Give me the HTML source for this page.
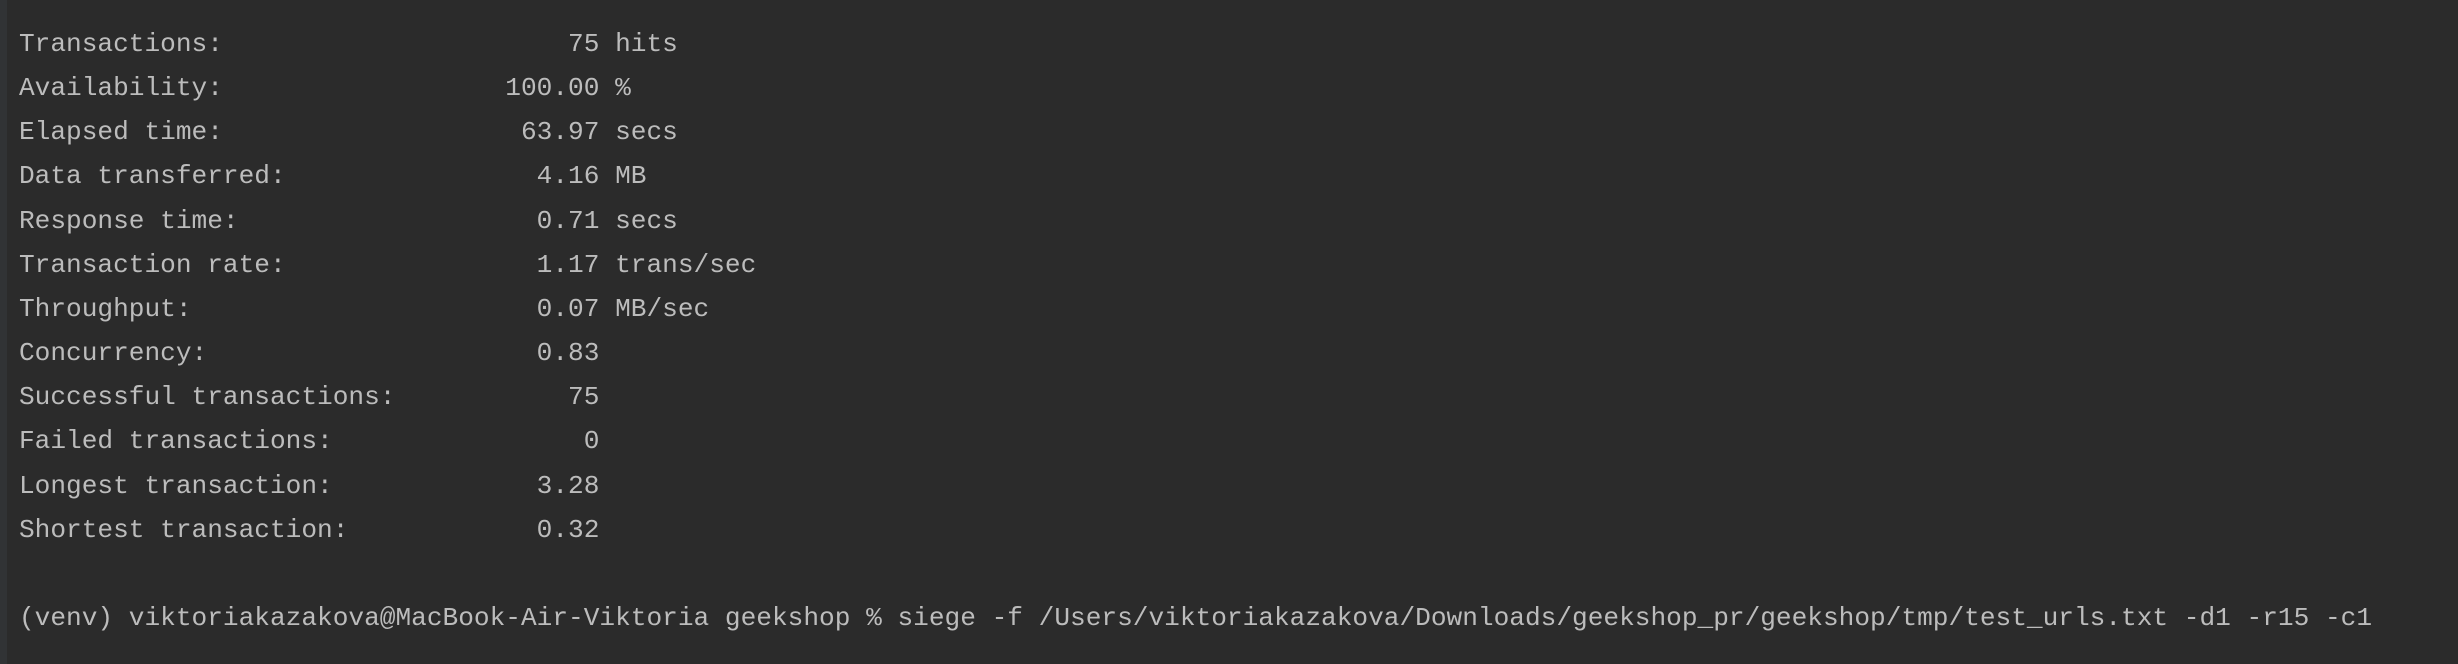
<!DOCTYPE html>
<html><head><meta charset="utf-8"><style>
html,body{margin:0;padding:0;background:#2b2b2b;width:2458px;height:664px;overflow:hidden}
.bar{position:absolute;left:0;top:0;width:7px;height:664px;background:#313335}
pre{position:absolute;left:19px;top:22px;margin:0;font-family:"Liberation Mono",monospace;font-size:26.15px;line-height:44.15px;color:#bcbcbc}
</style></head><body><div class="bar"></div><pre>Transactions:                      75 hits
Availability:                  100.00 %
Elapsed time:                   63.97 secs
Data transferred:                4.16 MB
Response time:                   0.71 secs
Transaction rate:                1.17 trans/sec
Throughput:                      0.07 MB/sec
Concurrency:                     0.83
Successful transactions:           75
Failed transactions:                0
Longest transaction:             3.28
Shortest transaction:            0.32

(venv) viktoriakazakova@MacBook-Air-Viktoria geekshop % siege -f /Users/viktoriakazakova/Downloads/geekshop_pr/geekshop/tmp/test_urls.txt -d1 -r15 -c1</pre></body></html>
